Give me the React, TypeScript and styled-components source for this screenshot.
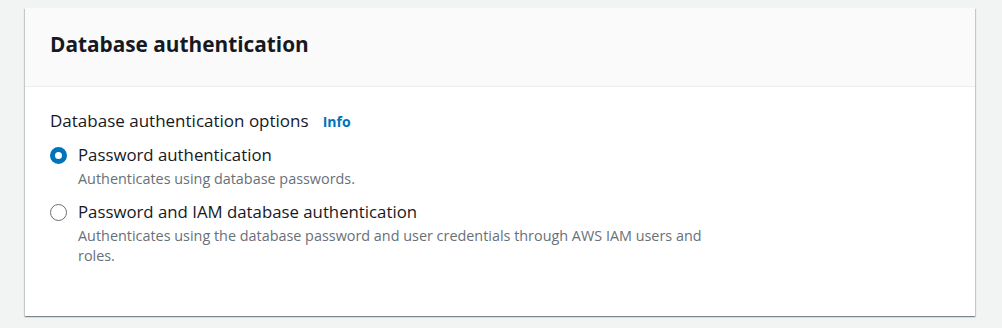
import React from "react";
import styled, { createGlobalStyle } from "styled-components";

const Global = createGlobalStyle`
  html, body { margin: 0; padding: 0; background: #f2f3f3; }
  body { font-family: "Open Sans", "Liberation Sans", sans-serif; color: #16191f; }
  * { box-sizing: border-box; }
`;

const Page = styled.div`
  padding: 8px 27px 12px 25px;
`;

const Card = styled.section`
  background: #fff;
  box-shadow: 0 1px 1px 0 rgba(0, 28, 36, 0.3), 1px 1px 1px 0 rgba(0, 28, 36, 0.15),
    -1px 1px 1px 0 rgba(0, 28, 36, 0.15);
`;

const Header = styled.div`
  background: #fafafa;
  border-bottom: 1px solid #eaeded;
  padding: 22px 25px 28px;
`;

const Title = styled.h2`
  margin: 0;
  font-size: 20.8px;
  line-height: 28px;
  font-weight: 700;
  color: #16191f;
`;

const Body = styled.div`
  padding: 23px 25px 50px;
`;

const FieldLabel = styled.div`
  display: flex;
  align-items: baseline;
  gap: 14px;
  font-size: 17px;
  line-height: 22px;
`;

const InfoLink = styled.a`
  font-size: 14px;
  font-weight: 700;
  color: #0073bb;
  text-decoration: none;
`;

const Group = styled.div`
  display: flex;
  flex-direction: column;
  gap: 12px;
  margin-top: 11px;
`;

const Option = styled.label`
  display: grid;
  grid-template-columns: 17px 1fr;
  column-gap: 11px;
  align-items: start;
  max-width: 680px;
`;

const RadioCircle = styled.span<{ $checked?: boolean }>`
  width: 17px;
  height: 17px;
  margin-top: 3px;
  border-radius: 50%;
  border: ${(p) => (p.$checked ? "5px solid #0073bb" : "1.5px solid #687078")};
  background: #fff;
`;

const OptionText = styled.div`
  display: flex;
  flex-direction: column;
`;

const OptionLabel = styled.span`
  font-size: 16.8px;
  line-height: 22px;
  color: #16191f;
`;

const OptionDesc = styled.span`
  font-size: 14.4px;
  line-height: 20px;
  color: #687078;
  margin-top: 3px;
`;

const options = [
  {
    label: "Password authentication",
    desc: "Authenticates using database passwords.",
    checked: true,
  },
  {
    label: "Password and IAM database authentication",
    desc: "Authenticates using the database password and user credentials through AWS IAM users and roles.",
    checked: false,
  },
];

export default function App() {
  return (
    <>
      <Global />
      <Page>
        <Card>
          <Header>
            <Title>Database authentication</Title>
          </Header>
          <Body>
            <FieldLabel>
              <span>Database authentication options</span>
              <InfoLink href="#">Info</InfoLink>
            </FieldLabel>
            <Group>
              {options.map((o) => (
                <Option key={o.label}>
                  <RadioCircle $checked={o.checked} />
                  <OptionText>
                    <OptionLabel>{o.label}</OptionLabel>
                    <OptionDesc>{o.desc}</OptionDesc>
                  </OptionText>
                </Option>
              ))}
            </Group>
          </Body>
        </Card>
      </Page>
    </>
  );
}
